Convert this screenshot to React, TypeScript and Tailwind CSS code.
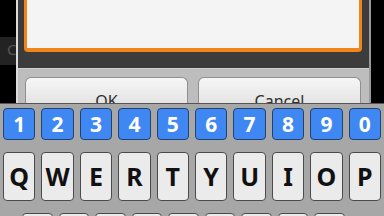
const numbers = ["1", "2", "3", "4", "5", "6", "7", "8", "9", "0"]
const topRow = ["Q", "W", "E", "R", "T", "Y", "U", "I", "O", "P"]
const homeRow = ["a", "s", "d", "f", "g", "h", "j", "k", "l"]

export default function App() {
  return (
    <div
      className="w-[384px] h-[216px] overflow-hidden bg-black"
      style={{ fontFamily: '"Noto Sans", "DejaVu Sans", sans-serif' }}
    >
      {/* dialog over the dimmed app */}
      <div className="flex h-[103px]">
        <div className="w-[16px] shrink-0 bg-black pt-[37px]">
          <div className="h-[28px] bg-[#232323] overflow-hidden pl-[7px] pt-[5px] text-[15px] leading-none text-[#555]">
            C
          </div>
        </div>
        <div className="w-[2px] shrink-0 bg-[#dcdcdc]" />
        <div className="w-[351px] shrink-0 flex flex-col bg-[#3c3c3c]">
          <div className="ml-[6px] mr-[7px] h-[52px] shrink-0 rounded-b-[4px] border-x-[3px] border-b-[4px] border-[#f0861a] bg-[#f4f4f4]" />
          <div className="mt-[16px] flex-1 flex gap-[10px] overflow-hidden bg-[#bdbdbd] border-t border-[#cfcfcf] pl-[7px] pr-[8px] pt-[8px]">
            <div className="flex-1 rounded-t-[6px] border border-b-0 border-[#8f8f8f] bg-gradient-to-b from-[#f6f6f6] to-[#e4e4e4] pt-[15px] text-center text-[16px] leading-none text-[#2e2e2e]">
              OK
            </div>
            <div className="flex-1 rounded-t-[6px] border border-b-0 border-[#8f8f8f] bg-gradient-to-b from-[#f6f6f6] to-[#e4e4e4] pt-[15px] text-center text-[16px] leading-none text-[#2e2e2e]">
              Cancel
            </div>
          </div>
        </div>
        <div className="w-[2px] shrink-0 bg-[#9a9a9a]" />
        <div className="flex-1 bg-black" />
      </div>

      {/* soft keyboard */}
      <div className="h-[113px] border-t border-[#555] bg-[#a7a7a7] pt-[4px]">
        <div className="grid grid-cols-10 h-[32px]">
          {numbers.map((n) => (
            <div key={n} className="px-[3px]">
              <div className="h-full flex items-center justify-center rounded-[4px] border border-[#24426e] bg-[#3f88f3] text-[21px] font-bold leading-none text-white">
                {n}
              </div>
            </div>
          ))}
        </div>
        <div className="mt-[12px] grid grid-cols-10 h-[49px]">
          {topRow.map((k) => (
            <div key={k} className="px-[3px]">
              <div className="h-full flex items-center justify-center rounded-[4px] border border-[#4a4a4a] bg-[#ebebeb] text-[25px] font-bold leading-none text-[#111]">
                {k}
              </div>
            </div>
          ))}
        </div>
        {/* next row only peeks in at the bottom edge */}
        <div className="mt-[12px] grid grid-cols-10 h-[49px] pl-[19px]">
          {homeRow.map((k) => (
            <div key={k} className="px-[3px]">
              <div className="h-full rounded-[4px] border border-[#4a4a4a] bg-[#ebebeb]" />
            </div>
          ))}
        </div>
      </div>
    </div>
  )
}
